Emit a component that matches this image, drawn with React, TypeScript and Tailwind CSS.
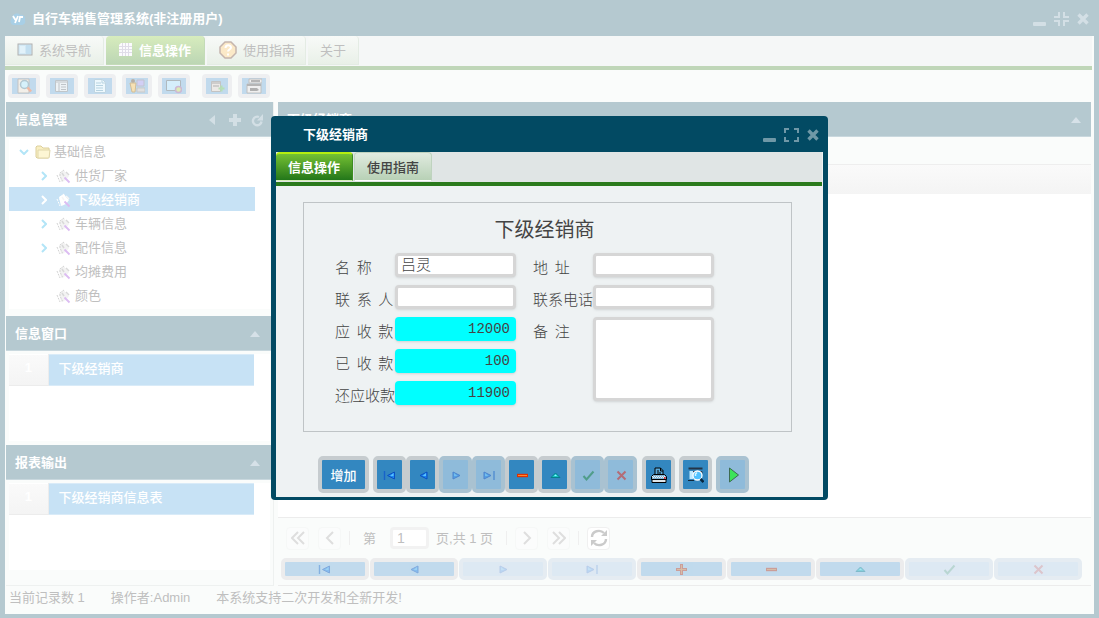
import { useState } from 'react';
import type { ReactNode } from 'react';
import clsx from 'clsx';

type IconName =
  | 'first' | 'prev' | 'next' | 'last' | 'add' | 'remove' | 'edit' | 'ok' | 'cancel'
  | 'print' | 'preview' | 'run';

const menuTabs = ['系统导航', '信息操作', '使用指南', '关于'];

const treeItems = [
  { label: '供货厂家', open: true },
  { label: '下级经销商', open: true },
  { label: '车辆信息', open: true },
  { label: '配件信息', open: true },
  { label: '均摊费用', open: false },
  { label: '颜色', open: false },
];

const gridButtons: { icon: IconName; label: string; disabled?: boolean }[] = [
  { icon: 'first', label: '首记录' },
  { icon: 'prev', label: '上一记录' },
  { icon: 'next', label: '下一记录', disabled: true },
  { icon: 'last', label: '末记录', disabled: true },
  { icon: 'add', label: '增加' },
  { icon: 'remove', label: '删除' },
  { icon: 'edit', label: '修改' },
  { icon: 'ok', label: '保存', disabled: true },
  { icon: 'cancel', label: '取消', disabled: true },
];

const shapes: Record<IconName, ReactNode> = {
  first: (
    <>
      <path d="M2.5 4v9" stroke="#1763c9" strokeWidth="1.4" />
      <path d="M12.5 5v7L5.5 8.5z" fill="#1c86f2" stroke="#0b4fc0" />
      <path d="M11.5 6v3H8z" fill="#58c1ff" />
    </>
  ),
  prev: (
    <>
      <path d="M12 5v7L5 8.5z" fill="#1c86f2" stroke="#0b4fc0" />
      <path d="M11 6v3H7.5z" fill="#58c1ff" />
    </>
  ),
  next: (
    <>
      <path d="M5 5v7l7-3.5z" fill="#1c86f2" stroke="#0b4fc0" />
      <path d="M6 6v3h3.5z" fill="#58c1ff" />
    </>
  ),
  last: (
    <>
      <path d="M3 5v7l7-3.5z" fill="#1c86f2" stroke="#0b4fc0" />
      <path d="M4 6v3h3.5z" fill="#58c1ff" />
      <path d="M13 4v9" stroke="#1763c9" strokeWidth="1.4" />
    </>
  ),
  add: (
    <>
      <path d="M3 8.5h11M8.5 3v11" stroke="#e03000" strokeWidth="3" />
      <path d="M4 8.5h9M8.5 4v9" stroke="#ff8a2a" />
    </>
  ),
  remove: (
    <>
      <path d="M3 8.5h11" stroke="#e03000" strokeWidth="3.4" />
      <path d="M4 8.5h9" stroke="#ff8a2a" />
    </>
  ),
  edit: (
    <>
      <path d="M4 10.5h9L8.5 6z" fill="#19c4c4" stroke="#067f8c" />
      <path d="M7 9h3L8.5 7.5z" fill="#8ff" />
    </>
  ),
  ok: <path d="M3.5 9l3 3.5 7-8" fill="none" stroke="#12803c" strokeWidth="2" />,
  cancel: <path d="M4.5 4.5l8 8M12.5 4.5l-8 8" stroke="#d92015" strokeWidth="2" />,
  print: (
    <>
      <path d="M4 8V1h5.5L12 3.5V8" fill="#5aa9d8" stroke="#000" />
      <path d="M9.5 1v3H12M6 4h2M6 6h4" fill="none" stroke="#000" />
      <path d="M2.5 7.5h11l2 2v3H.5v-3z" fill="#7fb2d2" stroke="#000" />
      <path d="M1 9.5h14M2 10.5h11" stroke="#e9eef1" strokeDasharray="1 1" />
      <path d="M13 11h1.5" stroke="#f00" strokeWidth="1.5" />
      <path d="M1 12.500h14v3H1z" fill="#dfe6ea" stroke="#000" />
    </>
  ),
  preview: (
    <>
      <path d="M.5 1.500h14" stroke="#243447" strokeWidth="2" />
      <path d="M3 4.500h11v2" fill="none" stroke="#243447" />
      <path d="M1.500 4h3.500v8H1.500z" fill="#bfe9ff" />
      <path d="M0 13.500h6" stroke="#10283a" />
      <circle cx="9.500" cy="8.500" r="4.500" fill="#4fc0ff" stroke="#fff" strokeWidth="1.300" />
      <path d="M7.500 9V7L9 5.500" fill="none" stroke="#d9f6ff" strokeWidth="1.500" />
      <path d="M12.500 12l3 3" stroke="#07263e" strokeWidth="2.500" />
    </>
  ),
  run: <path d="M4.500 1v14l9-7z" fill="#3be35a" stroke="#3c6b52" />,
};

function Icon({ name, faded }: { name: IconName; faded?: boolean }) {
  return (
    <svg viewBox="0 0 16 16" className={clsx('h-4 w-4 shrink-0', faded && 'opacity-50')}>
      {shapes[name]}
    </svg>
  );
}

function WindowButtons({ maximized, className }: { maximized?: boolean; className: string }) {
  return (
    <div className={clsx('flex items-center gap-2', className)}>
      <button type="button" aria-label="最小化">
        <svg viewBox="0 0 14 14" className="h-3.5 w-3.5">
          <rect x="1" y="10" width="13" height="4" rx="1" fill="currentColor" />
        </svg>
      </button>
      <button type="button" aria-label="最大化">
        <svg viewBox="0 0 15 14" className="h-3.5 w-[15px]" fill="none" stroke="currentColor" strokeWidth="2">
          {maximized ? (
            <path d="M5 0v5H0M10 0v5h5M5 14V9H0M10 14V9h5" />
          ) : (
            <path d="M1 5V1h4M10 1h4v4M1 9v4h4M10 13h4V9" />
          )}
        </svg>
      </button>
      <button type="button" aria-label="关闭">
        <svg viewBox="0 0 12 12" className="h-3 w-3" stroke="currentColor" strokeWidth="3.4">
          <path d="M1.500 1.500l9 9M10.500 1.500l-9 9" />
        </svg>
      </button>
    </div>
  );
}

function CollapseArrow() {
  return (
    <button type="button" aria-label="折叠">
      <svg viewBox="0 0 10 6" className="h-1.5 w-2.5">
        <path d="M0 6l5-6 5 6z" fill="#d6e1e8" />
      </svg>
    </button>
  );
}

function PanelHeader({ title, children }: { title: string; children: ReactNode }) {
  return (
    <div className="flex h-[35px] shrink-0 items-center justify-between border-b border-[#c9d8de] bg-[#b5c9d0] pt-0.5 pr-[10px] pl-[9px]">
      <h2 className="font-bold text-white">{title}</h2>
      <div className="flex items-center gap-2">{children}</div>
    </div>
  );
}

const menuIcons: ReactNode[] = [
  <svg key="nav" viewBox="0 0 16 14" className="h-3.5 w-4">
    <rect x="1" y="1" width="14" height="11" fill="#d3e9f5" stroke="#b0b0b0" />
    <path d="M3 3h5v7H3z" fill="#e2f2fa" />
    <path d="M9 2h5v9H9z" fill="#c3dff0" />
  </svg>,
  <svg key="grid" viewBox="0 0 16 16" className="h-4 w-4">
    <path d="M3 1h11v13H1V3z" fill="#fbfbfd" />
    <path d="M1 4.500h13M1 7.500h13M1 10.500h13M4.500 1v13M7.500 1v13M10.500 1v13" stroke="#e0dde8" />
  </svg>,
  <svg key="help" viewBox="0 0 18 18" className="h-[18px] w-[18px]">
    <path d="M6 1h6l5 5v6l-5 5H6l-5-5V6z" fill="#fbe9c8" stroke="#c5b5ae" strokeWidth="1.500" />
    <path d="M6.500 7c0-3.500 5.500-3.500 5.500-.5 0 2-3 2-3 4M9 12.500v2" fill="none" stroke="#fff" strokeWidth="2" />
  </svg>,
  null,
];

const menuTabStyles = [
  'w-[99px] gap-[6px] pl-3',
  'w-[99px] gap-[5px] pl-3',
  'w-[99px] gap-[6px] pl-3',
  'w-[51px] pl-3',
];

const toolIcons: { label: string; width: string; drawing: ReactNode }[] = [
  {
    label: '查询',
    width: 'w-8',
    drawing: (
      <>
        <path d="M2 1h11v14H2z" fill="#f2efe9" stroke="#c3c3c3" />
        <circle cx="8.500" cy="6.500" r="4" fill="#d6f1fb" stroke="#b3c8d2" strokeWidth="1.500" />
        <path d="M11.500 9.500l3.500 4" stroke="#efb9a4" strokeWidth="2.500" />
      </>
    ),
  },
  {
    label: '列表',
    width: 'w-8',
    drawing: (
      <>
        <path d="M1.500 2.500h12v11h-12z" fill="#edf2f5" stroke="#c0c6ca" />
        <path d="M2 4h11M5 5v8M7 6.500h5M7 9h5M7 11.500h5" stroke="#bfc4c8" />
      </>
    ),
  },
  {
    label: '文档',
    width: 'w-8',
    drawing: (
      <>
        <path d="M2.500 1.500h8l3 3v10h-11z" fill="#edf8fd" stroke="#bfd5e1" />
        <path d="M10 2v3h3M4 5h5M4 7.500h7M4 10h7M4 12.500h7" fill="none" stroke="#b7d3e1" />
      </>
    ),
  },
  {
    label: '用户',
    width: 'w-[30px]',
    drawing: (
      <>
        <circle cx="4" cy="3" r="2" fill="#b8b0a7" />
        <path d="M1 5h6l-1 9H3z" fill="#f7e1b4" stroke="#d2bd97" />
        <path d="M8 2h7v6H8z" fill="#d2cff5" stroke="#c3c3cf" />
        <path d="M8 10h8v4H8z" fill="#e0e0e0" stroke="#c9c9c9" />
      </>
    ),
  },
  {
    label: '桌面',
    width: 'w-8',
    drawing: (
      <>
        <path d="M.5 2.500h14v10H.5z" fill="#d5eefb" stroke="#b0b9be" />
        <circle cx="12.500" cy="11.500" r="3" fill="#dcebb5" stroke="#cdb7d4" strokeWidth="1.500" />
      </>
    ),
  },
  {
    label: '导出',
    width: 'w-[30px]',
    drawing: (
      <>
        <path d="M2.500 3.500h9v10h-9z" fill="#ece9e6" stroke="#c3c3c3" />
        <path d="M3 5h8M4 8h6" stroke="#c3c3c3" strokeWidth="1.500" />
        <path d="M12.500 7.500v6M9.500 10.500h6" stroke="#b5dfb5" strokeWidth="2" />
      </>
    ),
  },
  {
    label: '打印',
    width: 'w-8',
    drawing: (
      <>
        <path d="M3 1h13v4H3zM1 6h14v9H1z" fill="#efefef" stroke="#c0c0c0" />
        <path d="M5 3h9M1 7h14" stroke="#b5b5b5" strokeWidth="2" />
        <path d="M4 10h7l2 2-2 1H4z" fill="#b0b0b0" />
      </>
    ),
  },
];

function TreeLeafIcon({ active }: { active: boolean }) {
  return (
    <svg viewBox="0 0 15 15" className="h-[15px] w-[15px]">
      <path d="M3 4l5-3 2 3 3 3-3 4-5 2z" fill={active ? '#fff' : '#f3f3f3'} />
      <path
        d="M8 1L4 4v3l3 6M1 6l3 7"
        fill="none"
        stroke={active ? '#fff' : '#d3d3d3'}
        strokeDasharray="2 1"
      />
      <path d="M6 4l2 3M10 3l3 3" stroke={active ? '#f5f5f5' : '#d9d9d9'} strokeWidth="1.500" />
      <path d="M8.500 8.500l5 5" stroke="#dcbcf2" strokeWidth="1.800" />
    </svg>
  );
}

function InfoTree() {
  return (
    <div className="h-[179px] px-[3px] pt-[2px] pb-[7px]">
      <div className="h-full bg-white">
        <div className="flex h-6 items-center pt-0.5 pl-[10px]">
          <svg viewBox="0 0 10 6" className="mr-[6px] h-1.5 w-2.5" fill="none" stroke="#b3e5f7" strokeWidth="2">
            <path d="M1 1l4 4 4-4" />
          </svg>
          <svg viewBox="0 0 16 14" className="mr-[3px] h-3.5 w-4">
            <path d="M1 2l1-1h4l2 2h6v9l-1 1H2l-1-1z" fill="#f9efc2" stroke="#dccf9c" />
            <path d="M3 5h12l-1 8H3z" fill="#fdf6d4" stroke="#e0d6aa" />
          </svg>
          <span>基础信息</span>
        </div>
        <ul>
          {treeItems.map((item) => {
            const active = item.label === '下级经销商';
            return (
              <li
                key={item.label}
                className={clsx(
                  'mr-[15px] flex h-6 items-center pt-0.5 pl-8',
                  active && 'bg-[#c7e2f5] font-medium text-white'
                )}
              >
                <svg
                  viewBox="0 0 6 10"
                  className="mr-[9px] h-2.5 w-1.5"
                  fill="none"
                  stroke={active ? '#fff' : '#b3e5f7'}
                  strokeWidth="2"
                >
                  {item.open && <path d="M1 1l4 4-4 4" />}
                </svg>
                <TreeLeafIcon active={active} />
                <span className="ml-1">{item.label}</span>
              </li>
            );
          })}
        </ul>
      </div>
    </div>
  );
}

function SideList({ label }: { label: string }) {
  return (
    <table className="w-[245px] border-collapse">
      <tbody>
        <tr className="h-[31px]">
          <td className="w-[39px] border-r border-b border-[#ececec] bg-linear-to-b from-[#fafafa] to-[#f4f4f4] pb-[3px] text-center font-bold text-white">
            1
          </td>
          <td className="border-y border-[#d9ebf8] bg-[#c7e2f5] pb-[3px] pl-[10px] font-medium text-white">
            {label}
          </td>
        </tr>
      </tbody>
    </table>
  );
}

function PagerButton({ label, path }: { label: string; path: string }) {
  return (
    <button
      type="button"
      aria-label={label}
      className="flex h-[23px] w-[23px] items-center justify-center rounded-sm border border-[#f6f8f7] bg-[#fbfcfc]"
    >
      <svg viewBox="0 0 14 14" className="h-3.5 w-3.5" fill="none" stroke="#dedede" strokeWidth="2">
        <path d={path} />
      </svg>
    </button>
  );
}

function PagerSeparator() {
  return <span className="mx-2 h-[14px] w-px bg-[#efefef]" />;
}

function Pager() {
  const [page, setPage] = useState('1');

  return (
    <div className="flex h-[41px] shrink-0 items-center border-t border-[#ececec] pl-2">
      <PagerButton label="首页" path="M7 1L1 7l6 6M13 1L7 7l6 6" />
      <span className="w-[9px]" />
      <PagerButton label="上一页" path="M10 1L4 7l6 6" />
      <PagerSeparator />
      <label htmlFor="page" className="mr-[14px] ml-[5px] pt-0.5">
        第
      </label>
      <input
        id="page"
        type="text"
        value={page}
        onChange={(e) => setPage(e.target.value)}
        className="mr-[7px] h-[22px] w-[39px] rounded-sm border-3 border-[#f2f2f2] bg-white px-1 text-sm leading-none"
      />
      <span className="pt-0.5">页,共 1 页</span>
      <span className="w-[5px]" />
      <PagerSeparator />
      <PagerButton label="下一页" path="M4 1l6 6-6 6" />
      <span className="w-[9px]" />
      <PagerButton label="末页" path="M1 1l6 6-6 6M7 1l6 6-6 6" />
      <PagerSeparator />
      <button
        type="button"
        aria-label="刷新"
        className="flex h-[23px] w-[23px] items-center justify-center rounded-sm border border-[#f0f0f0] bg-white"
      >
        <svg viewBox="0 0 18 18" className="h-[18px] w-[18px] shrink-0" fill="none" stroke="#cbcbcb" strokeWidth="2.400">
          <path d="M2 8c0-6 8-8 12-4M16 10c0 6-8 8-12 4" />
          <path d="M17 1v6h-6zM1 17v-6h6z" fill="#cbcbcb" stroke="none" />
        </svg>
      </button>
    </div>
  );
}

function MainWindow() {
  return (
    <div className="flex min-h-screen flex-col bg-[#b5c9d0] px-[5px] pb-1 text-[#bfbfbf]">
      <header className="flex h-9 shrink-0 items-center pt-0.5 pr-[5px] pl-[5px]">
        <svg viewBox="0 0 16 14" className="mr-[6px] h-3.5 w-4">
          <path d="M3 13a4 4 0 0 1-1-7C2 2 8 0 10 3c3-1 6 2 5 5 1 3-1 5-4 5z" fill="#a8cfe6" />
          <path d="M3 4l2.500 4M8 4l-3 7M9 10l1-5h3" fill="none" stroke="#fff" strokeWidth="1.800" />
        </svg>
        <h1 className="font-bold text-white">自行车销售管理系统(非注册用户)</h1>
        <WindowButtons maximized className="ml-auto text-[#d3dfe5]" />
      </header>

      <div className="flex flex-1 flex-col bg-[#fafcfb]">
        <nav className="mr-[2px] flex h-[34px] shrink-0 gap-[2px] border-b-4 border-[#bfd6b8] bg-[#f5f7f7]">
          {menuTabs.map((tab, i) => (
            <button
              key={tab}
              type="button"
              className={clsx(
                'flex h-[29px] items-center rounded-t-sm border-r border-b',
                menuTabStyles[i],
                tab === '信息操作'
                  ? 'border-[#c4dbb8] bg-linear-to-b from-[#d7ecbd] to-[#bcd6b4] font-bold text-white'
                  : 'border-[#e4ece4] bg-linear-to-b from-[#f8faf8] to-[#e9f0e8]'
              )}
            >
              {menuIcons[i]}
              <span className="pt-0.5">{tab}</span>
            </button>
          ))}
        </nav>

        <div className="flex h-8 shrink-0 items-center gap-[6px] pl-[3px]">
          {toolIcons.map((tool) => (
            <button
              key={tool.label}
              type="button"
              aria-label={tool.label}
              className={clsx(
                'flex h-6 items-center justify-center rounded-sm border-4 border-[#eeeff1] bg-[#c1daed]',
                tool.width,
                tool.label === '导出' && 'ml-[6px]'
              )}
            >
              <svg viewBox="0 0 16 16" className="h-4 w-4 shrink-0">
                {tool.drawing}
              </svg>
            </button>
          ))}
        </div>

        <div className="flex flex-1 gap-1 pr-[3px] pl-[1px]">
          <aside className="flex w-[268px] shrink-0 flex-col border-r border-b border-[#eef1f0]">
            <PanelHeader title="信息管理">
              <button type="button" aria-label="收起">
                <svg viewBox="0 0 12 12" className="h-3 w-3">
                  <path d="M8 1v10L2 6z" fill="#d3dfe5" />
                </svg>
              </button>
              <button type="button" aria-label="新增" className="ml-0.5">
                <svg viewBox="0 0 12 12" className="h-3 w-3">
                  <path d="M6 0v12M0 6h12" stroke="#d3dfe5" strokeWidth="4" />
                </svg>
              </button>
              <button type="button" aria-label="重新加载" className="ml-0.5">
                <svg viewBox="0 0 12 13" className="h-[13px] w-3">
                  <path d="M8 3a4.300 4.300 0 1 0 2.500 4.500" fill="none" stroke="#d3dfe5" strokeWidth="2.400" />
                  <path d="M6 6.500h6V0z" fill="#d3dfe5" />
                </svg>
              </button>
            </PanelHeader>
            <InfoTree />

            <PanelHeader title="信息窗口">
              <span className="mr-[3px] flex"><CollapseArrow /></span>
            </PanelHeader>
            <div className="h-[94px] px-[3px] pt-[3px] pb-1">
              <div className="h-full bg-white">
                <SideList label="下级经销商" />
              </div>
            </div>

            <PanelHeader title="报表输出">
              <span className="mr-[3px] flex"><CollapseArrow /></span>
            </PanelHeader>
            <div className="flex flex-1 flex-col px-[3px] pt-[3px] pb-[15px]">
              <div className="flex-1 bg-white">
                <SideList label="下级经销商信息表" />
              </div>
            </div>
          </aside>

          <main className="flex min-w-0 flex-1 flex-col border-b border-[#ececec]">
            <PanelHeader title="下级经销商">
              <CollapseArrow />
            </PanelHeader>
            <div className="h-[27px] shrink-0" />
            <div className="h-[30px] shrink-0 border-t border-[#eeeeee] bg-linear-to-b from-[#fafafa] to-[#f4f4f4]" />
            <div className="flex-1 bg-white" />
            <Pager />
            <div className="mr-[9px] mb-[5px] ml-[3px] flex shrink-0 gap-px">
              {gridButtons.map((button) => (
                <button
                  key={button.icon}
                  type="button"
                  aria-label={button.label}
                  disabled={button.disabled}
                  className={clsx(
                    'flex h-[22px] flex-1 items-center justify-center overflow-hidden rounded-[5px] border-4',
                    button.disabled ? 'border-[#e5ecf2] bg-[#dde9f3]' : 'border-[#ececed] bg-[#c1daed]'
                  )}
                >
                  <span className="flex opacity-35">
                    <Icon name={button.icon} faded={button.disabled} />
                  </span>
                </button>
              ))}
            </div>
          </main>
        </div>

        <footer className="flex h-7 shrink-0 items-start gap-[26px] pt-[2px] pl-1">
          <span>当前记录数 1</span>
          <span>操作者:Admin</span>
          <span>本系统支持二次开发和全新开发!</span>
        </footer>
      </div>
    </div>
  );
}

function Field({
  id,
  label,
  value = '',
  amount,
}: {
  id: string;
  label: string;
  value?: string;
  amount?: boolean;
}) {
  const [text, setText] = useState(value);

  return (
    <div className="flex h-6">
      <label
        htmlFor={id}
        className='w-[60px] shrink-0 pt-1 font-["Noto_Sans_CJK_SC",sans-serif] leading-5 font-light whitespace-pre'
      >
        {label}
      </label>
      <input
        id={id}
        type="text"
        value={text}
        onChange={(e) => setText(e.target.value)}
        className={clsx(
          'h-6 w-[121px] rounded-sm leading-none shadow-sm',
          amount
            ? 'bg-[#00ffff] px-[6px] text-right font-["Liberation_Mono","Noto_Sans_CJK_SC",monospace] text-sm text-[#444444]'
            : 'border-3 border-[#d6d6d6] bg-white px-[3px] pb-1 font-light'
        )}
      />
    </div>
  );
}

function DialogButton({ icon, label, disabled }: { icon: IconName; label: string; disabled?: boolean }) {
  return (
    <button
      type="button"
      aria-label={label}
      disabled={disabled}
      className={clsx(
        'flex h-[37px] w-[33px] items-center justify-center rounded-[5px] border-4',
        disabled ? 'border-[#a9c2d1] bg-[#8fbbda]' : 'border-[#c6cccf] bg-[#3387c0]'
      )}
    >
      <span className="flex">
        <Icon name={icon} faded={disabled && icon !== 'run'} />
      </span>
    </button>
  );
}

function DealerDialog() {
  return (
    <section
      role="dialog"
      aria-label="下级经销商"
      className="absolute top-[116px] left-[271px] w-[557px] rounded bg-[#024a63] pr-[5px] pb-[3px] pl-[5px] text-[#444444]"
    >
      <header className="flex h-9 items-center pt-0.5 pr-1 pl-[27px]">
        <h2 className="font-bold text-white">下级经销商</h2>
        <WindowButtons className="ml-auto text-[#6f98a7]" />
      </header>
      <div className="bg-[#eef2f3]">
        <nav className="mr-[1px] flex h-[34px] gap-px border-b-4 border-[#2a7a1c] bg-[#e0e5e5]">
          <button
            type="button"
            className="h-[29px] rounded-t-sm border-t-2 border-r border-b border-t-[#b4ee10] border-r-[#3d8c22] border-b-[#d5efb8] bg-linear-to-b from-[#74c133] to-[#22771a] px-3 pt-0.5 font-bold text-white"
          >
            信息操作
          </button>
          <button
            type="button"
            className="h-[29px] rounded-t-sm border border-[#bfd3bf] border-b-white bg-linear-to-b from-[#e0ebe0] to-[#b8d1b6] px-3 pt-0.5 font-medium"
          >
            使用指南
          </button>
        </nav>

        <form className="px-[27px] pt-4 pb-1" onSubmit={(e) => e.preventDefault()}>
          <div className="mr-[4px] h-[230px] border border-[#bfc4c6] pr-[77px] pl-[31px]">
            <h3 className="pt-3 pb-2 pl-10 text-center text-xl leading-[30px]">下级经销商</h3>
            <div className="flex gap-[17px] text-[15px]">
              <div className="flex flex-col gap-2">
                <Field id="name" label="名  称" value="吕灵" />
                <Field id="contact" label="联  系  人" />
                <Field id="receivable" label="应  收  款" value="12000" amount />
                <Field id="received" label="已  收  款" value="100" amount />
                <Field id="remaining" label="还应收款" value="11900" amount />
              </div>
              <div className="flex flex-col gap-2">
                <Field id="address" label="地  址" />
                <Field id="phone" label="联系电话" />
                <div className="flex">
                  <label
                    htmlFor="remark"
                    className='w-[60px] shrink-0 pt-1 font-["Noto_Sans_CJK_SC",sans-serif] leading-5 font-light whitespace-pre'
                  >
                    {'备  注'}
                  </label>
                  <textarea
                    id="remark"
                    className="h-[84px] w-[121px] resize-none rounded-sm border-3 border-[#d6d6d6] bg-white shadow-sm"
                  />
                </div>
              </div>
            </div>
          </div>

          <div className="mt-6 flex gap-1 pl-[15px]">
            <button
              type="button"
              className="h-[37px] w-[51px] rounded-[5px] border-4 border-[#c6cccf] bg-[#3387c0] pt-0.5 font-medium text-white"
            >
              增加
            </button>
            <div className="mr-px flex">
              {gridButtons
                .filter((button) => button.icon !== 'add')
                .map((button) => (
                  <DialogButton key={button.icon} {...button} />
                ))}
            </div>
            <DialogButton icon="print" label="打印" />
            <DialogButton icon="preview" label="预览" />
            <DialogButton icon="run" label="执行" disabled />
          </div>
        </form>
      </div>
    </section>
  );
}

export default function App() {
  return (
    <div className='relative min-h-screen font-["Liberation_Sans","Noto_Sans_CJK_SC",sans-serif] text-[13px] leading-5'>
      <MainWindow />
      <DealerDialog />
    </div>
  );
}
